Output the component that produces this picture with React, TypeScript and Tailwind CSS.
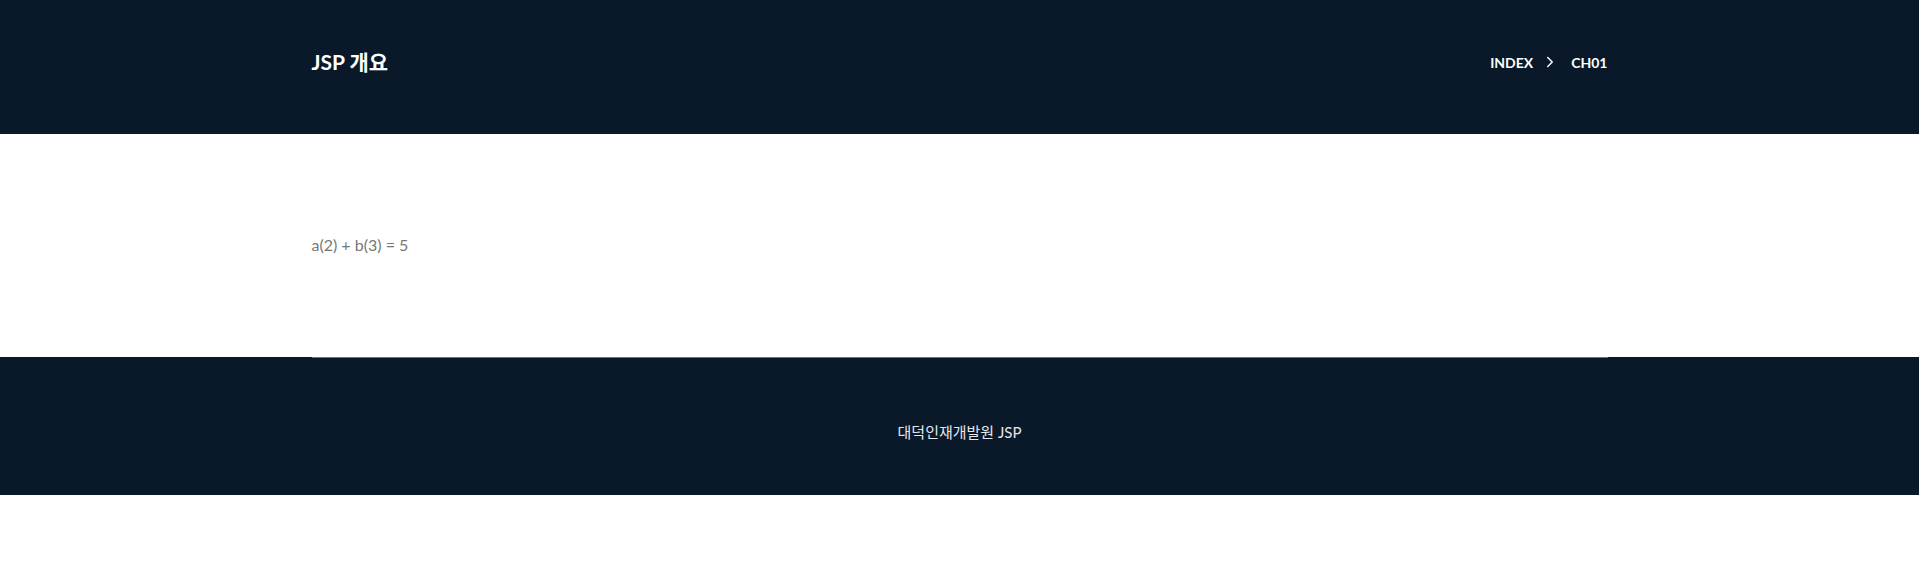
import React from "react";
import { ChevronRight } from "lucide-react";

export default function App() {
  return (
    <div className="min-h-[565px] bg-white font-['Lato','Noto_Sans_CJK_KR',sans-serif]">
      {/* Header */}
      <header className="bg-[#0a192a]">
        <div className="mx-auto flex h-[134px] max-w-[1296px] items-center justify-between pb-[10px]">
          <h1 className="text-[21px] font-bold text-white">JSP 개요</h1>
          <nav className="flex items-center text-[14px] font-bold text-white">
            <span>INDEX</span>
            <ChevronRight className="ml-[8px] mr-[12px] h-[18px] w-[18px]" strokeWidth={2} />
            <span>CH01</span>
          </nav>
        </div>
      </header>

      {/* Content */}
      <main className="mx-auto max-w-[1296px] pt-[99px] pb-[101px]">
        <p className="text-[16px] leading-[23px] text-[#777777]">a(2) + b(3) = 5</p>
      </main>

      {/* Footer */}
      <footer className="bg-[#0a192a]">
        <div className="mx-auto max-w-[1296px] border-t border-[#6b7280] pt-[62px] pb-[51px] text-center">
          <p className="text-[15px] leading-[24px] text-[#e5e7eb]">대덕인재개발원 JSP</p>
        </div>
      </footer>
    </div>
  );
}
